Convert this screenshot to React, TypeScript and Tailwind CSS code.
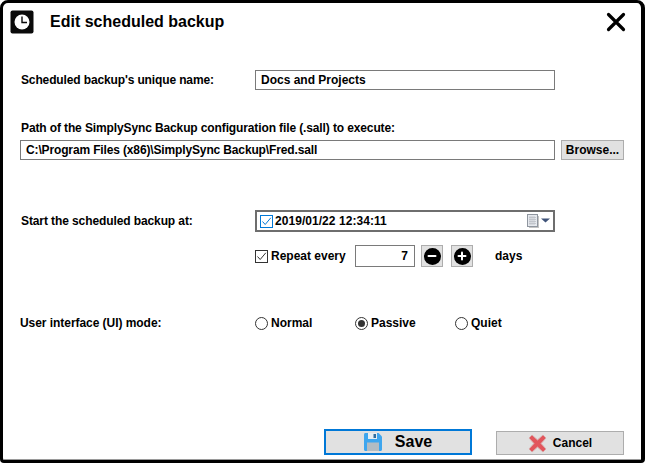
import React from 'react';
import { Minus, Plus } from 'lucide-react';

const font = { fontFamily: '"Liberation Sans", Arial, sans-serif' };

const ClockIcon = () => (
  <svg width="24" height="24" viewBox="0 0 24 24">
    <rect x="0.5" y="0.5" width="23" height="23" rx="2" fill="#0a0a0a" />
    <circle cx="12" cy="12" r="7.5" fill="#fff" />
    <path d="M12 6.5V12.5H17" fill="none" stroke="#0a0a0a" strokeWidth="1.4" />
  </svg>
);

const CloseIcon = () => (
  <svg width="20" height="20" viewBox="0 0 20 20">
    <path d="M2.5 2.5L17.5 17.5M17.5 2.5L2.5 17.5" stroke="#000" strokeWidth="3.2" strokeLinecap="round" />
  </svg>
);

const CalendarIcon = () => (
  <svg width="23" height="14" viewBox="0 0 23 14">
    <rect x="2" y="2" width="10" height="12" fill="#c4c4c4" />
    <rect x="0.5" y="0.5" width="10" height="12" fill="#e6e9ee" stroke="#8f969f" />
    <path d="M2 3.5H9M2 5.5H9M2 7.5H9M2 9.5H9M3 2V11M5 2V11M7 2V11" stroke="#bcc0c6" strokeWidth="0.8" />
    <path d="M14 4.5H23L18.5 8.5Z" fill="#3f5379" />
  </svg>
);

const SaveIcon = () => (
  <svg width="18" height="18" viewBox="0 0 18 18">
    <path d="M0 1.5C0 .6.6 0 1.5 0H14.5L18 3.5V16.5C18 17.4 17.4 18 16.5 18H1.5C.6 18 0 17.4 0 16.5Z" fill="#3ea6ee" />
    <rect x="4" y="0" width="9" height="6" fill="#e6eef3" />
    <rect x="9.5" y="1" width="2.5" height="4" fill="#2f6d9f" />
    <rect x="3" y="9.5" width="12" height="8.5" fill="#b3bcc3" />
  </svg>
);

const CancelIcon = () => (
  <svg width="19" height="19" viewBox="0 0 19 19">
    <path d="M4 1L9.5 6 15 1 18 4 13 9.5 18 15 15 18 9.5 13 4 18 1 15 6 9.5 1 4Z" fill="#e2555c" stroke="#d9a5a5" strokeWidth="1" strokeLinejoin="round" />
  </svg>
);

const CheckBox = ({ blue = false }: { blue?: boolean }) => (
  <span className={`flex h-[13px] w-[13px] shrink-0 items-center justify-center border bg-white ${blue ? 'border-[#0078d7]' : 'border-[#333333]'}`}>
    <svg width="11" height="11" viewBox="0 0 11 11">
      <path d="M1.5 5.5L4.2 8.5L9.8 1.8" fill="none" stroke={blue ? '#0078d7' : '#333333'} strokeWidth="1" />
    </svg>
  </span>
);

const Radio = ({ label, checked = false, className = '' }: { label: string; checked?: boolean; className?: string }) => (
  <div className={`flex items-center gap-[3px] ${className}`}>
    <span className="flex h-[13px] w-[13px] shrink-0 items-center justify-center rounded-full border border-[#333333] bg-white">
      {checked && <span className="h-[7px] w-[7px] rounded-full bg-[#333333]" />}
    </span>
    <span>{label}</span>
  </div>
);

const StepButton = ({ children }: { children: React.ReactNode }) => (
  <div className="flex h-[22px] w-[22px] items-center justify-center border border-[#adadad] bg-[#e1e1e1]">
    <span className="flex h-[17px] w-[17px] items-center justify-center rounded-full bg-black text-white">{children}</span>
  </div>
);

export default function App() {
  return (
    <div style={font} className="h-[465px] w-[645px] bg-white text-xs font-bold text-black">
      <div className="flex h-[463px] w-[645px] flex-col rounded-t-[8px] rounded-b-[4px] border-t-[3px] border-r-[4px] border-b-[3px] border-l-[3px] border-black bg-white pl-[17px] pr-[17px] shadow-[inset_0_-1px_0_#9a9a9a]">
        <div className="-ml-[10px] -mr-[2px] mt-[7px] flex h-6 items-center">
          <ClockIcon />
          <span className="ml-[16px] text-base">Edit scheduled backup</span>
          <span className="ml-auto flex"><CloseIcon /></span>
        </div>

        <div className="mt-[36px] flex h-5 items-center">
          <span className="w-[235px] shrink-0 pl-[1px] tracking-[-0.13px]">Scheduled backup's unique name:</span>
          <div className="flex h-5 w-[300px] items-center border border-[#7a7a7a] px-[5px]">Docs and Projects</div>
        </div>

        <div className="mt-[31px] h-[14px] pl-[1px] leading-[14px] tracking-[-0.12px]">Path of the SimplySync Backup configuration file (.sall) to execute:</div>
        <div className="mt-[5px] flex h-5 items-center gap-[6px]">
          <div className="flex h-5 w-[535px] items-center border border-[#7a7a7a] px-[5px] tracking-[-0.14px]">C:\Program Files (x86)\SimplySync Backup\Fred.sall</div>
          <div className="flex h-5 w-[63px] items-center justify-center border border-[#adadad] bg-[#e1e1e1]">Browse...</div>
        </div>

        <div className="mt-[50px] flex h-[22px] items-center">
          <span className="w-[235px] shrink-0 pl-[1px] tracking-[-0.1px]">Start the scheduled backup at:</span>
          <div className="flex h-[22px] w-[300px] items-center border-2 border-[#6e6e6e] pl-[3px] pr-[3px]">
            <CheckBox blue />
            <span className="ml-[2px] tracking-[0.05px]">2019/01/22 12:34:11</span>
            <span className="ml-auto flex"><CalendarIcon /></span>
          </div>
        </div>

        <div className="ml-[235px] mt-[13px] flex h-[22px] items-center">
          <CheckBox />
          <span className="ml-[3px] w-[84px]">Repeat every</span>
          <div className="flex h-[22px] w-[60px] items-center justify-end border border-[#7a7a7a] pr-[6px]">7</div>
          <div className="ml-[6px]"><StepButton><Minus size={12} strokeWidth={4} /></StepButton></div>
          <div className="ml-[8px]"><StepButton><Plus size={12} strokeWidth={4} /></StepButton></div>
          <span className="ml-[22px]">days</span>
        </div>

        <div className="mt-[48px] flex h-4 items-center">
          <span className="w-[235px] shrink-0 tracking-[-0.05px]">User interface (UI) mode:</span>
          <Radio label="Normal" className="w-[100px]" />
          <Radio label="Passive" checked className="w-[100px]" />
          <Radio label="Quiet" />
        </div>

        <div className="mt-auto mb-[5px] ml-[304px] flex items-end">
          <div className="flex h-[26px] w-[148px] items-center justify-center gap-[13px] border-2 border-[#0078d7] bg-[#e1e1e1] text-base">
            <SaveIcon />
            <span>Save</span>
          </div>
          <div className="ml-[24px] flex h-6 w-[128px] items-center justify-center gap-[6px] border border-[#adadad] bg-[#e1e1e1]">
            <CancelIcon />
            <span>Cancel</span>
          </div>
        </div>
      </div>
    </div>
  );
}
